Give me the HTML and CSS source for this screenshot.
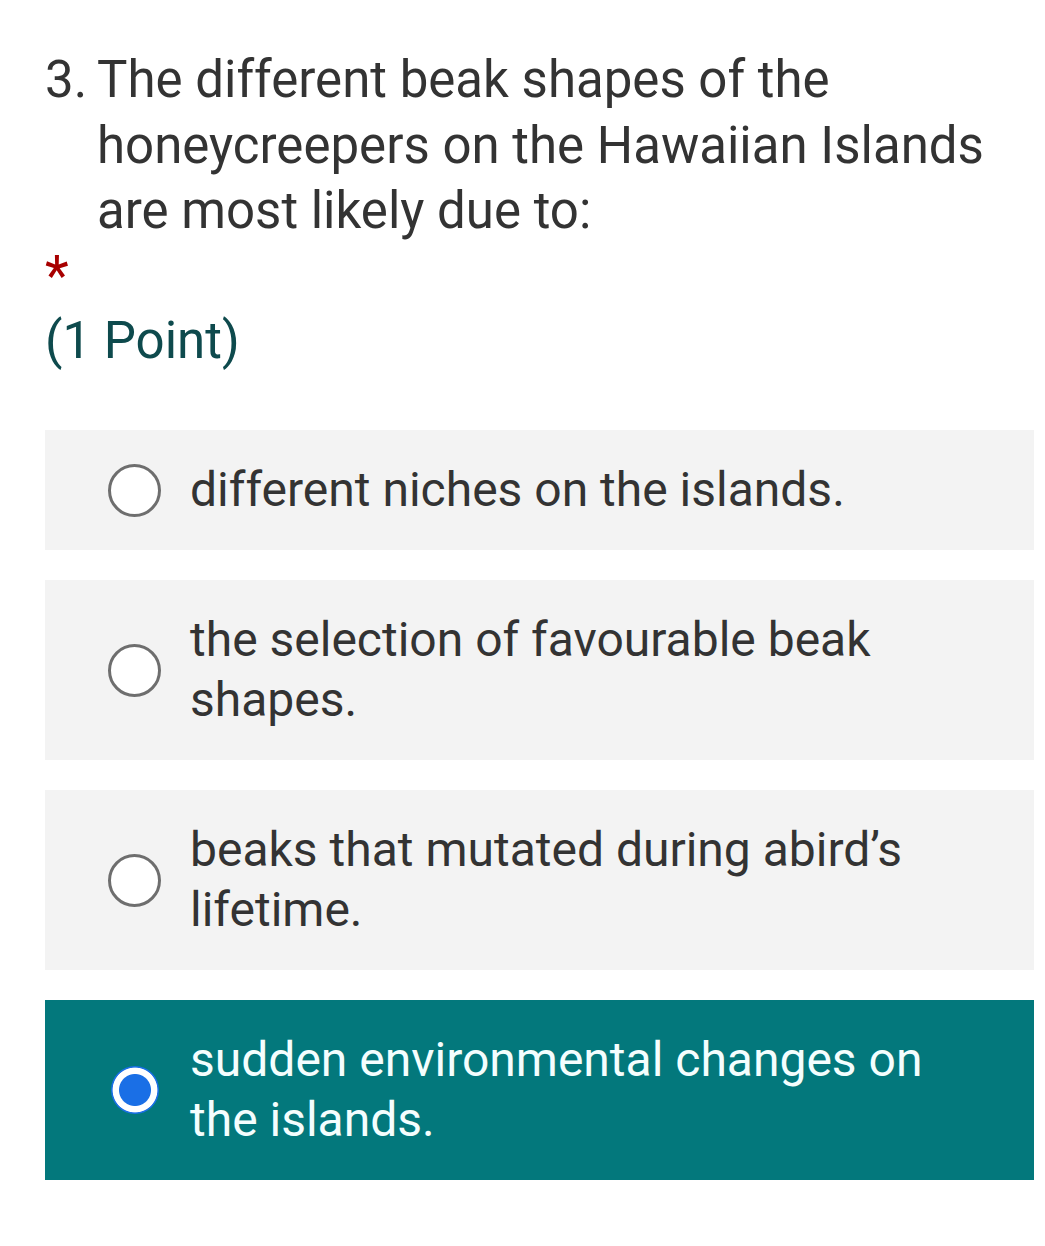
FILE: index.html
```html
<!DOCTYPE html>
<html lang="en">
<head>
<meta charset="utf-8">
<title>Question 3</title>
<link rel="stylesheet" href="styles.css">
</head>
<body>
<main class="question">
  <div class="title">
    <span class="num">3.</span>
    <span class="text">The different beak shapes of the honeycreepers on the Hawaiian Islands are most likely due to:</span>
  </div>
  <div class="required">*</div>
  <div class="points">(1 Point)</div>
  <div class="options">
    <div class="option">
      <span class="radio"></span>
      <span class="label">different niches on the islands.</span>
    </div>
    <div class="option">
      <span class="radio"></span>
      <span class="label">the selection of favourable beak shapes.</span>
    </div>
    <div class="option">
      <span class="radio"></span>
      <span class="label">beaks that mutated during abird’s lifetime.</span>
    </div>
    <div class="option selected">
      <span class="radio checked"></span>
      <span class="label">sudden environmental changes on the islands.</span>
    </div>
  </div>
</main>
</body>
</html>
```
FILE: styles.css
```css
html, body {
  margin: 0;
  padding: 0;
  background: #ffffff;
}
body {
  font-family: Roboto, "Noto Sans", Arial, sans-serif;
  color: #333333;
}
.question {
  padding: 47px 11px 0 45px;
}
.title {
  display: flex;
  font-size: 51px;
  line-height: 65.5px;
}
.num {
  flex: 0 0 52px;
}
.text {
  flex: 1;
  padding-right: 40px;
}
.required {
  color: #a80000;
  font-size: 55px;
  line-height: 65.5px;
}
.points {
  color: #0e4a4d;
  font-size: 51px;
  line-height: 58px;
  margin-top: 3px;
}
.options {
  display: flex;
  flex-direction: column;
  gap: 30px;
  margin-top: 60px;
}
.option {
  display: flex;
  align-items: center;
  background: #f3f3f3;
  padding: 30px 100px 30px 63px;
  font-size: 48px;
  line-height: 60px;
}
.radio {
  flex: 0 0 auto;
  width: 47px;
  height: 47px;
  border: 3px solid #6e6e6e;
  border-radius: 50%;
  background: #ffffff;
  margin-right: 29px;
  box-sizing: content-box;
}
.option.selected {
  background: #03787c;
  color: #f4fefe;
}
.radio.checked {
  width: 48px;
  height: 48px;
  border: none;
  background: radial-gradient(circle, #1a6fe6 0 15.5px, #ffffff 16.5px 22px, #1a6fe6 22.8px);
  margin-left: 3px;
  margin-right: 31px;
}
```
